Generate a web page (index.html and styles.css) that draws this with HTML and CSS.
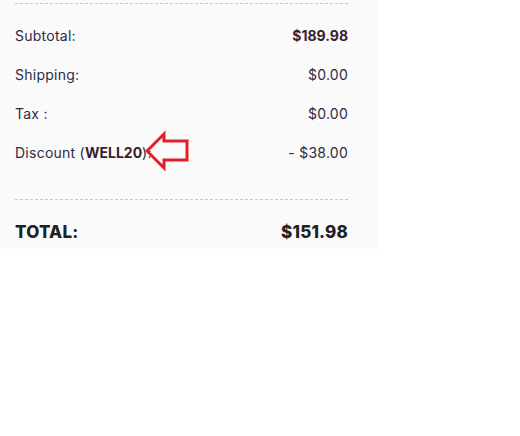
FILE: index.html
```html
<!DOCTYPE html>
<html>
<head>
<meta charset="utf-8">
<link rel="stylesheet" href="styles.css">
</head>
<body>
<div class="panel">
  <div class="dash"></div>
  <div class="rows">
    <div class="row"><span>Subtotal:</span><span class="strong">$189.98</span></div>
    <div class="row"><span>Shipping:</span><span>$0.00</span></div>
    <div class="row"><span>Tax :</span><span>$0.00</span></div>
    <div class="row"><span class="disc">Discount (<b>WELL20</b>):
      <svg class="arrow" width="48" height="48" viewBox="0 0 48 48"><polygon points="2,25 19,8 19,15 42,15 42,34 19,34 19,42" fill="none" stroke="#e41e26" stroke-width="3" stroke-linejoin="miter"/></svg></span><span>- $38.00</span></div>
  </div>
  <div class="dash dash2"></div>
  <div class="row total"><span>TOTAL:</span><span>$151.98</span></div>
</div>
</body>
</html>
```
FILE: styles.css
```css
html, body { margin: 0; padding: 0; background: #fff; }
body { font-family: Inter, "Open Sans", sans-serif; }
.panel {
  width: 379px;
  height: 249px;
  box-sizing: border-box;
  background: #fafafa;
  padding: 3px 31px 0 15px;
}
.dash { border-top: 1px dashed #c9c9c9; }
.rows { margin-top: 12px; }
.row {
  display: flex;
  justify-content: space-between;
  align-items: center;
  height: 39px;
  font-size: 14px;
  letter-spacing: 0.25px;
  color: #2e2a42;
}
.strong { font-weight: 700; color: #3a1e34; letter-spacing: 0; }
.disc { position: relative; }
.disc b { font-weight: 700; color: #3a1e34; letter-spacing: 0; }
.arrow { position: absolute; left: 130px; top: -18px; }
.dash2 { margin-top: 27px; }
.total {
  height: 60px;
  padding-top: 4px;
  box-sizing: border-box;
  font-size: 17px;
  font-weight: 800;
  letter-spacing: 0.2px;
  color: #222;
}
```
